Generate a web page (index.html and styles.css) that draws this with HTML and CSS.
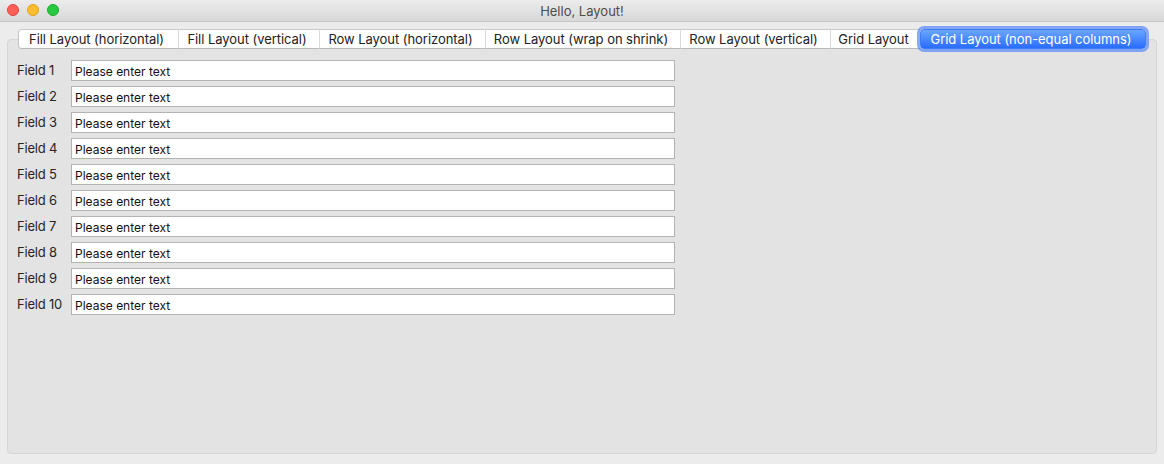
FILE: index.html
```html
<!DOCTYPE html>
<html>
<head>
<meta charset="utf-8">
<title>Hello, Layout!</title>
<link rel="stylesheet" href="styles.css">
</head>
<body>
<div class="window">
  <div class="titlebar">
    <div class="lights">
      <span class="light red"></span>
      <span class="light yellow"></span>
      <span class="light green"></span>
    </div>
    <div class="title">Hello, Layout!</div>
  </div>
  <div class="content">
    <div class="tabs">
      <div class="tab first" style="width:160px">Fill Layout (horizontal)</div>
      <div class="tab" style="width:141px">Fill Layout (vertical)</div>
      <div class="tab" style="width:166px">Row Layout (horizontal)</div>
      <div class="tab" style="width:195px">Row Layout (wrap on shrink)</div>
      <div class="tab" style="width:150px">Row Layout (vertical)</div>
      <div class="tab" style="width:90px">Grid Layout</div>
      <div class="tab active" style="width:226px">Grid Layout (non-equal columns)</div>
    </div>
    <div class="pane">
      <div class="form">
        <label class="lbl">Field 1</label><div class="input">Please enter text</div>
        <label class="lbl">Field 2</label><div class="input">Please enter text</div>
        <label class="lbl">Field 3</label><div class="input">Please enter text</div>
        <label class="lbl">Field 4</label><div class="input">Please enter text</div>
        <label class="lbl">Field 5</label><div class="input">Please enter text</div>
        <label class="lbl">Field 6</label><div class="input">Please enter text</div>
        <label class="lbl">Field 7</label><div class="input">Please enter text</div>
        <label class="lbl">Field 8</label><div class="input">Please enter text</div>
        <label class="lbl">Field 9</label><div class="input">Please enter text</div>
        <label class="lbl">Field 10</label><div class="input">Please enter text</div>
      </div>
    </div>
  </div>
</div>
</body>
</html>
```
FILE: styles.css
```css
html, body {
  margin: 0;
  padding: 0;
}
body {
  width: 1164px;
  height: 464px;
  overflow: hidden;
  background: #ececec;
  font-family: "Inter", "Noto Sans", "Liberation Sans", sans-serif;
  font-size: 13px;
  color: #262626;
}
.window {
  display: flex;
  flex-direction: column;
  height: 464px;
}
.titlebar {
  height: 21px;
  border-bottom: 1px solid #c6c6c6;
  background: linear-gradient(#ececec, #d8d8d8);
  display: flex;
  align-items: center;
  justify-content: center;
  position: relative;
}
.lights {
  position: absolute;
  left: 7px;
  top: 4px;
  display: flex;
  gap: 8px;
}
.light {
  width: 12px;
  height: 12px;
  border-radius: 50%;
  box-sizing: border-box;
}
.red { background: #fd5f57; border: 0.5px solid #e0443e; }
.yellow { background: #febc2e; border: 0.5px solid #dea123; }
.green { background: #28c840; border: 0.5px solid #1aab29; }
.title {
  color: #4d4d4d;
  font-size: 13px;
}
.content {
  padding: 7px 7px 10px 7px;
  display: flex;
  flex-direction: column;
  flex: 1;
}
.tabs {
  display: flex;
  justify-content: center;
  position: relative;
  z-index: 2;
  height: 20px;
}
.tab {
  box-sizing: border-box;
  height: 20px;
  background: #ffffff;
  border-top: 1px solid #c9c9c9;
  border-bottom: 1px solid #b9b9b9;
  border-left: 1px solid #dadada;
  display: flex;
  align-items: center;
  justify-content: center;
  color: #222222;
  white-space: nowrap;
  padding: 0 4px 1px 0;
  letter-spacing: -0.05px;
}
.tab.first {
  border-left: 1px solid #c4c4c4;
  border-radius: 4px 0 0 4px;
}
.tab.active {
  background: linear-gradient(#6aa6ff, #2a6cff);
  color: #ffffff;
  border: 1px solid #3e7cf7;
  border-radius: 4px;
  box-shadow: 0 0 0 3px rgba(96, 142, 250, 0.75);
}
.pane {
  margin-top: -10px;
  flex: 1;
  background: #e3e3e3;
  border: 1px solid #d6d6d6;
  border-radius: 4px;
  padding: 20px 0 0 9px;
}
.form {
  display: grid;
  grid-template-columns: 54px 604px;
  row-gap: 5px;
  align-items: center;
}
.lbl {
  color: #262626;
  font-size: 13px;
  letter-spacing: -0.2px;
  padding-bottom: 2px;
}
.input {
  box-sizing: border-box;
  height: 21px;
  background: #ffffff;
  border: 1px solid #b3b3b3;
  color: #111111;
  padding: 3px 0 0 3px;
  line-height: 16px;
  font-size: 12px;
}
```
